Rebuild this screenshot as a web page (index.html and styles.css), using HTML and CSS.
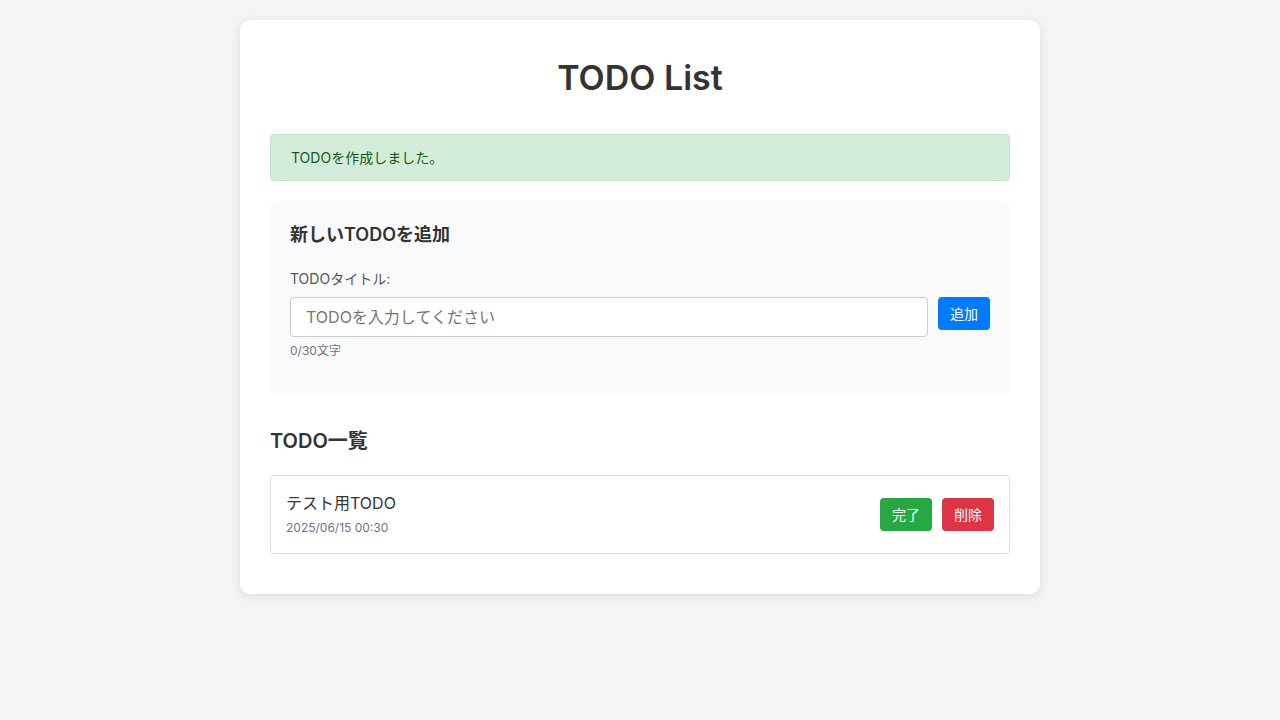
FILE: index.html
```html
<!DOCTYPE html>
<html lang="ja">
<head>
<meta charset="utf-8">
<title>TODO List</title>
<link rel="stylesheet" href="styles.css">
</head>
<body>
<div class="container">
  <h1 class="title">TODO List</h1>
  <div class="alert">TODOを作成しました。</div>
  <div class="form-section">
    <h3 class="form-title">新しいTODOを追加</h3>
    <div class="form-group">
      <label class="label" for="title">TODOタイトル:</label>
      <div class="input-row">
        <input class="input" id="title" type="text" placeholder="TODOを入力してください">
        <button class="btn btn-primary">追加</button>
      </div>
      <div class="counter">0/30文字</div>
    </div>
  </div>
  <h2 class="list-title">TODO一覧</h2>
  <div class="todo-item">
    <div class="todo-info">
      <div class="todo-name">テスト用TODO</div>
      <div class="todo-date">2025/06/15 00:30</div>
    </div>
    <div class="todo-actions">
      <button class="btn btn-success">完了</button>
      <button class="btn btn-danger">削除</button>
    </div>
  </div>
</div>
</body>
</html>
```
FILE: styles.css
```css
* { box-sizing: border-box; }
body {
  margin: 0;
  padding: 20px;
  background: #f4f4f4;
  font-family: Inter, "Noto Sans CJK JP", sans-serif;
  color: #333;
  line-height: 1.6;
}
.container {
  width: 800px;
  margin: 0 auto;
  background: #fff;
  border-radius: 10px;
  padding: 30px;
  box-shadow: 0 2px 10px rgba(0,0,0,0.1);
}
.title {
  font-size: 34px;
  font-weight: 600;
  text-align: center;
  margin: 1px 0 29px;
  color: #333;
}
.alert {
  background: #d4edda;
  border: 1px solid #c3e6cb;
  color: #155724;
  border-radius: 4px;
  padding: 12px 20px;
  font-size: 14px;
  line-height: 21px;
  margin-bottom: 20px;
}
.form-section {
  background: #f8f9fa;
  border-radius: 8px;
  padding: 20px;
  margin-bottom: 30px;
}
.form-title {
  font-size: 18px;
  font-weight: 600;
  margin: 0 0 18px;
}
.form-group { margin-bottom: 15px; }
.label {
  display: block;
  font-size: 14px;
  color: #555;
  margin-bottom: 6px;
}
.input-row {
  display: flex;
  align-items: flex-start;
  gap: 10px;
}
.input {
  flex: 1;
  height: 40px;
  padding: 8px 15px;
  border: 1px solid #ccc;
  border-radius: 4px;
  font-family: inherit;
  font-size: 16px;
  color: #333;
  background: #fff;
}
.input::placeholder { color: #757575; }
.counter {
  font-size: 12px;
  color: #6c757d;
  margin-top: 4px;
}
.list-title {
  font-size: 20px;
  font-weight: 600;
  margin: 0 0 18px;
}
.todo-item {
  display: flex;
  justify-content: space-between;
  align-items: center;
  border: 1px solid #ddd;
  border-radius: 4px;
  padding: 15px;
  margin-bottom: 10px;
}
.todo-name { font-size: 16px; }
.todo-date {
  font-size: 12px;
  color: #6c757d;
  margin-top: 2px;
}
.todo-actions {
  display: flex;
  gap: 10px;
}
.btn {
  border: none;
  border-radius: 4px;
  padding: 6px 12px;
  font-family: inherit;
  font-size: 14px;
  line-height: 21px;
  color: #fff;
  cursor: pointer;
}
.btn-primary { background: #007bff; }
.btn-success { background: #28a745; }
.btn-danger { background: #dc3545; }
```
